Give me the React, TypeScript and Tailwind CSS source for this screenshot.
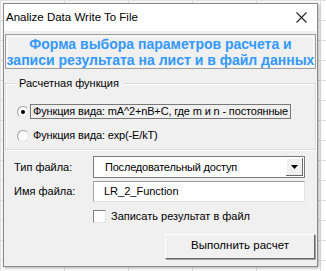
import React from "react";

const ui = { fontFamily: '"Liberation Sans", Arial, sans-serif' };

export default function App() {
  return (
    <div className="relative w-[326px] h-[271px] overflow-hidden bg-white" style={ui}>
      {/* sheet grid behind the dialog */}
      <div className="absolute inset-0 bg-[linear-gradient(to_right,#e1e1e1_1px,transparent_1px),linear-gradient(to_bottom,#e1e1e1_1px,transparent_1px)] bg-[size:64px_20px]" />

      <div className="absolute left-[3px] top-[3px] w-[315px] h-[264px] flex flex-col border border-[#8c8c8c] bg-[#f0f0f0] shadow-[1px_1px_3px_rgba(0,0,0,0.35)]">
        {/* title bar */}
        <div className="h-[27px] bg-white flex items-center justify-between pl-[2px] pr-[10px]">
          <span className="text-[11.5px] text-black leading-none">Analize Data Write To File</span>
          <svg width="11" height="11" viewBox="0 0 11 11">
            <path d="M0.5 0.5 L10.5 10.5 M10.5 0.5 L0.5 10.5" stroke="#222" strokeWidth="1.1" />
          </svg>
        </div>

        <div className="flex flex-col px-[1px] pt-[3px]">
          {/* header */}
          <div className="border border-[#a0a0a0] p-px">
            <div className="border border-white h-[31px] flex flex-col items-center justify-center">
              <p className="text-[14px] font-bold text-[#3399ff] leading-[16px] text-center whitespace-nowrap">
                Форма выбора параметров расчета и
                <br />
                записи результата на лист и в файл данных
              </p>
            </div>
          </div>

          {/* group box */}
          <div className="relative mt-[14px] h-[67px] border border-[#dcdcdc] shadow-[inset_1px_1px_0_#fff,1px_1px_0_#fff]">
            <span className="absolute -top-[9px] left-[9px] px-[4px] bg-[#f0f0f0] text-[11px] leading-[16px] text-black">
              Расчетная функция
            </span>
            <div className="flex flex-col pl-[11px] pt-[20px] gap-[9px]">
              <div className="flex items-center">
                <Radio checked />
                <span className="ml-[1px] border border-[#787878] px-[2px] h-[15px] flex items-center text-[11px] tracking-[-0.15px] text-black whitespace-nowrap">
                  Функция вида: mA^2+nB+C, где m и n - постоянные
                </span>
              </div>
              <div className="flex items-center">
                <Radio />
                <span className="ml-[4px] text-[11px] tracking-[-0.15px] leading-[15px] text-black">Функция вида: exp(-E/kT)</span>
              </div>
            </div>
          </div>

          {/* file fields */}
          <div className="flex flex-col pl-[9px] pr-[11px] mt-[6px]">
            <div className="flex items-center h-[22px]">
              <span className="w-[79px] text-[11px] text-black">Тип файла:</span>
              <div className="flex-1 h-[22px] bg-white border border-[#7a7a7a] flex items-center">
                <span className="flex-1 pl-[11px] text-[11px] tracking-[-0.2px] text-black">Последовательный доступ</span>
                <div className="w-[17px] h-[18px] mr-px bg-[#f0f0f0] border-r border-b border-[#696969] shadow-[inset_1px_1px_0_#fff] flex items-center justify-center">
                  <svg width="7" height="4" viewBox="0 0 7 4">
                    <path d="M0 0 H7 L3.5 4 Z" fill="#000" />
                  </svg>
                </div>
              </div>
            </div>
            <div className="flex items-center h-[22px] mt-[2px]">
              <span className="w-[79px] text-[11px] text-black">Имя файла:</span>
              <div className="flex-1 h-[21px] bg-white border border-[#a0a0a0] border-r-[#e3e3e3] border-b-[#e3e3e3] flex items-center">
                <span className="pl-[10px] text-[11px] text-black">LR_2_Function</span>
              </div>
            </div>
            <div className="flex items-center ml-[79px] mt-[6px]">
              <div className="w-[13px] h-[13px] shrink-0 bg-white border border-[#808080] border-r-[#e3e3e3] border-b-[#e3e3e3]" />
              <span className="ml-[5px] text-[11px] text-black">Записать результат в файл</span>
            </div>
            <div className="flex justify-end mt-[9px] mr-[-10px]">
              <button className="w-[150px] h-[25px] bg-[#f0f0f0] border border-white border-r-[#696969] border-b-[#696969] shadow-[1px_1px_0_#a0a0a0] text-[11.5px] text-black">
                Выполнить расчет
              </button>
            </div>
          </div>
        </div>
      </div>
    </div>
  );
}

function Radio({ checked }: { checked?: boolean }) {
  return (
    <div className="w-[12px] h-[12px] shrink-0 rounded-full bg-white border border-[#a0a0a0] border-r-[#e3e3e3] border-b-[#e3e3e3] flex items-center justify-center">
      {checked && <div className="w-[4px] h-[4px] rounded-full bg-black" />}
    </div>
  );
}
